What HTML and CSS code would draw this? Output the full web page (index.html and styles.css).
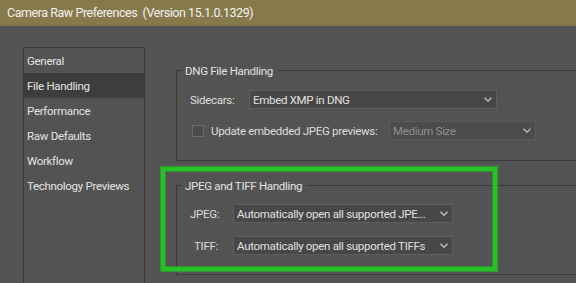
FILE: index.html
```html
<!DOCTYPE html>
<html>
<head>
<meta charset="utf-8">
<link rel="stylesheet" href="styles.css">
</head>
<body>
<div class="titlebar">Camera Raw Preferences&nbsp; (Version 15.1.0.1329)</div>
<div class="main">
  <ul class="nav">
    <li>General</li>
    <li class="active">File Handling</li>
    <li>Performance</li>
    <li>Raw Defaults</li>
    <li>Workflow</li>
    <li>Technology Previews</li>
  </ul>
  <div class="content">
    <section class="group dng">
      <div class="group-title">DNG File Handling</div>
      <div class="row row-a">
        <span class="lbl lbl-side">Sidecars:</span>
        <div class="select sel-side"><span>Embed XMP in DNG</span><svg class="chev" width="8" height="5" viewBox="0 0 8 5"><polyline points="0.5,0.8 4,4.2 7.5,0.8" fill="none" stroke="#c9c9c9" stroke-width="1.3"/></svg></div>
      </div>
      <div class="row row-b">
        <span class="check"></span>
        <span class="lbl-check">Update embedded JPEG previews:</span>
        <div class="select disabled sel-prev"><span>Medium Size</span><svg class="chev" width="8" height="5" viewBox="0 0 8 5"><polyline points="0.5,0.8 4,4.2 7.5,0.8" fill="none" stroke="#bdbdbd" stroke-width="1.3"/></svg></div>
      </div>
    </section>
    <section class="group jpeg">
      <div class="group-title">JPEG and TIFF Handling</div>
      <div class="row row-c">
        <span class="lbl lbl-jt">JPEG:</span>
        <div class="select sel-jt"><span>Automatically open all supported JPE...</span><svg class="chev" width="8" height="5" viewBox="0 0 8 5"><polyline points="0.5,0.8 4,4.2 7.5,0.8" fill="none" stroke="#c9c9c9" stroke-width="1.3"/></svg></div>
      </div>
      <div class="row row-d">
        <span class="lbl lbl-jt">TIFF:</span>
        <div class="select sel-jt"><span>Automatically open all supported TIFFs</span><svg class="chev" width="8" height="5" viewBox="0 0 8 5"><polyline points="0.5,0.8 4,4.2 7.5,0.8" fill="none" stroke="#c9c9c9" stroke-width="1.3"/></svg></div>
      </div>
    </section>
  </div>
</div>
<div class="highlight"></div>
</body>
</html>
```
FILE: styles.css
```css
html, body {
  margin: 0;
  padding: 0;
}
body {
  width: 576px;
  height: 283px;
  overflow: hidden;
  position: relative;
  background: #535353;
  color: #dedede;
  font-family: Roboto, "Noto Sans", sans-serif;
  font-size: 11.5px;
  letter-spacing: -0.3px;
}
.titlebar {
  height: 26px;
  line-height: 25px;
  background: #86794a;
  color: #f2f2f2;
  font-size: 12.5px;
  letter-spacing: -0.45px;
  padding-left: 7px;
  white-space: nowrap;
}
.main {
  display: flex;
  gap: 31px;
  padding-left: 23px;
  height: 257px;
  overflow: hidden;
}
.nav {
  list-style: none;
  margin: 21px 0 0;
  padding: 0;
  width: 120px;
  height: 300px;
  border: 1px solid #393939;
  flex: none;
}
.nav li {
  height: 24px;
  line-height: 24px;
  padding: 1px 0 0 3px;
  color: #e4e4e4;
  white-space: nowrap;
}
.nav li.active {
  background: #3d3d3d;
}
.content {
  margin-top: 44px;
  display: flex;
  flex-direction: column;
  gap: 24px;
  flex: none;
}
.group {
  width: 420px;
  border: 1px solid #3a3a3a;
}
.dng {
  padding-bottom: 20px;
}
.jpeg {
  padding-bottom: 19px;
}
.group-title {
  display: block;
  width: fit-content;
  margin: -8px 0 0 4px;
  padding: 0 4px;
  line-height: 16px;
  height: 16px;
  background: #535353;
  color: #e2e2e2;
}
.row {
  display: flex;
  align-items: center;
  height: 19px;
}
.row-a { margin-top: 11px; }
.row-b { margin-top: 12px; }
.row-c { margin-top: 10px; }
.row-d { margin-top: 13px; }
.lbl {
  margin-left: 13px;
  white-space: nowrap;
}
.lbl-side {
  width: 59px;
}
.lbl-jt {
  width: 28px;
  text-align: right;
  margin-right: 15px;
}
.check {
  margin-left: 15px;
  width: 12px;
  height: 12px;
  box-sizing: border-box;
  border: 1px solid #6a6a6a;
  background: #4b4b4b;
  flex: none;
}
.lbl-check {
  margin-left: 7px;
  width: 178px;
  white-space: nowrap;
}
.select {
  box-sizing: border-box;
  height: 19px;
  display: flex;
  align-items: center;
  justify-content: space-between;
  gap: 4px;
  background: #474747;
  border: 1px solid #5e5e5e;
  padding: 0 4px 0 3px;
  white-space: nowrap;
  color: #e0e0e0;
  flex: none;
}
.select span {
  overflow: hidden;
}
.chev {
  flex: none;
}
.sel-side {
  width: 248px;
}
.sel-prev {
  width: 147px;
}
.sel-jt {
  width: 220px;
}
.disabled {
  background: #4c4c4c;
  border-color: #5a5a5a;
  color: #8e8e8e;
}
.highlight {
  position: absolute;
  left: 161px;
  top: 167px;
  width: 336px;
  height: 104px;
  box-sizing: border-box;
  border: 4px solid #22c322;
  box-shadow: 0 0 1px 1px rgba(34, 195, 34, 0.55), inset 0 0 1px 1px rgba(34, 195, 34, 0.55);
}
```
